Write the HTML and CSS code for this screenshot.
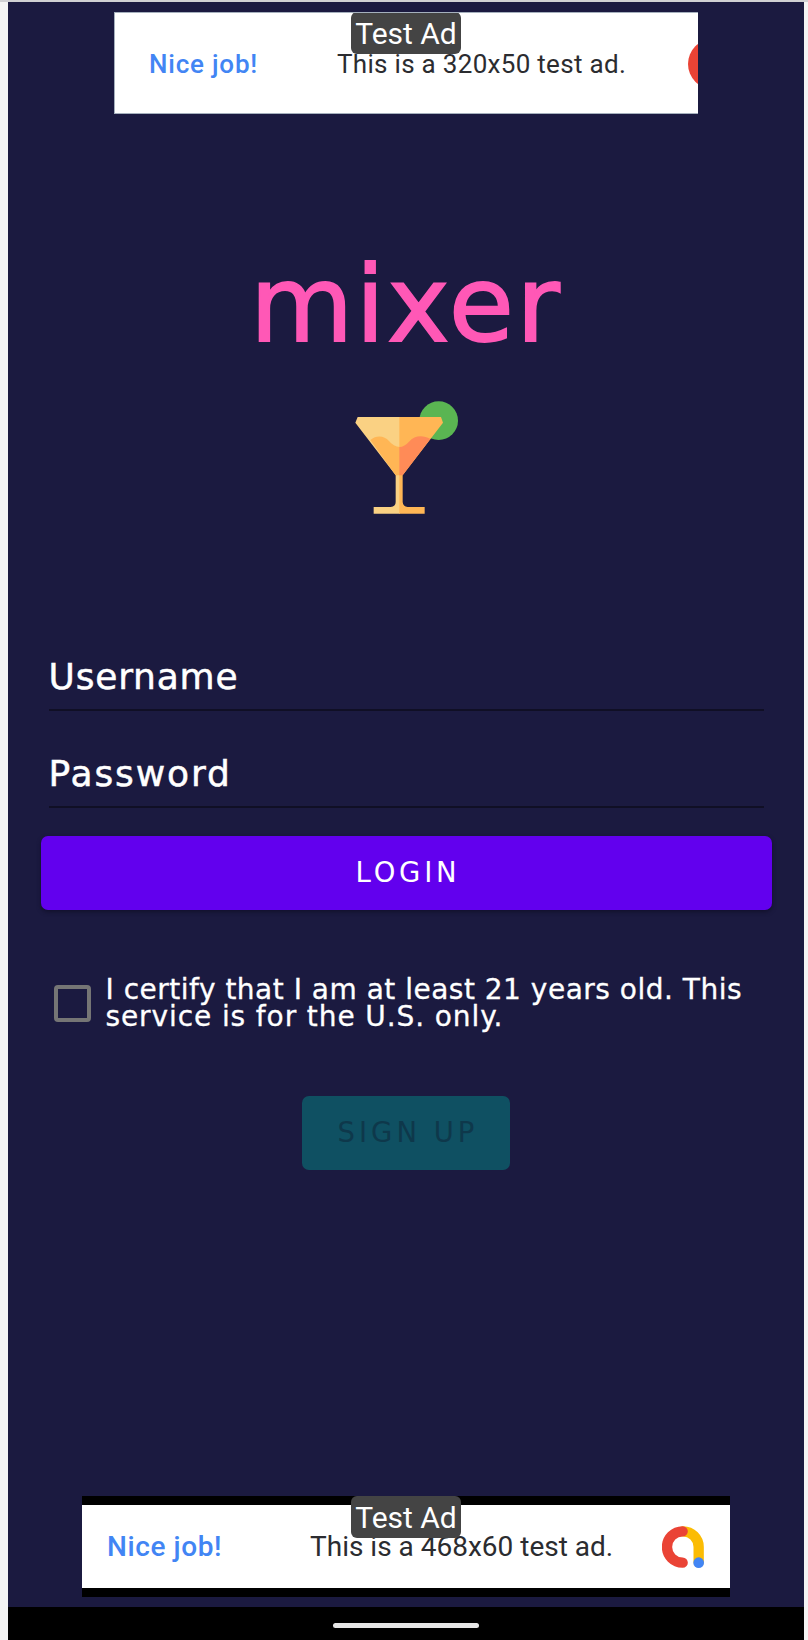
FILE: index.html
```html
<!DOCTYPE html>
<html lang="en">
<head>
<meta charset="utf-8">
<title>mixer</title>
<link rel="stylesheet" href="styles.css">
</head>
<body>
<main class="screen">
  <section class="ad ad-top">
    <span class="badge">Test Ad</span>
    <span class="nice">Nice job!</span>
    <span class="message">This is a 320x50 test ad.</span>
    <span class="red-dot"></span>
  </section>
  <h1 class="brand">mixer</h1>
  <svg class="cocktail" viewBox="0 0 390 405" aria-hidden="true">
    <circle cx="296" cy="92" r="58" fill="#5ab552"/>
    <path d="M53 81H180V371H101V351H152Q167 350 167 336V256L46 98Z" fill="#fad183"/>
    <path d="M178 81H303L309 98L188 256V336Q189 350 203 351H254V371H178Z" fill="#ffb655"/>
    <path d="M91 150C110 134 133 137 147 153Q160 170 180 171V256H167Z" fill="#ffb655"/>
    <path d="M178 171Q194 170 207 155C224 135 250 135 271 147L188 256H178Z" fill="#ff8b57"/>
  </svg>
  <form class="form">
    <div class="field username">Username</div>
    <div class="field password">Password</div>
    <button class="login" type="button">LOGIN</button>
    <label class="certify">
      <span class="box"></span>
      <span class="terms"><span class="line first">I certify that I am at least 21 years old. This</span> <span class="line second">service is for the U.S. only.</span></span>
    </label>
    <button class="signup" type="button">SIGN UP</button>
  </form>
  <section class="ad ad-bottom">
    <span class="badge">Test Ad</span>
    <span class="nice">Nice job!</span>
    <span class="message">This is a 468x60 test ad.</span>
    <svg class="admob" viewBox="0 0 126 126" aria-hidden="true" fill="none" stroke-width="31" stroke-linecap="round">
      <path d="M62 16A47 47 0 0 1 110 64V108" stroke="#fbbc04"/>
      <path d="M62 16A47 47 0 0 0 62 110" stroke="#ea4335"/>
      <circle cx="110" cy="110" r="16" fill="#4285f4"/>
    </svg>
  </section>
  <footer class="nav"><span class="pill"></span></footer>
</main>
</body>
</html>
```
FILE: styles.css
```css
* { box-sizing: border-box; }
body {
  margin: 0;
  height: 1640px;
  padding: 0 4px 0 8px;
  border-top: 2px solid #d0d0d3;
  background: #f4f4f4;
  overflow: hidden;
}
.screen {
  height: 1638px;
  padding-top: 10px;
  display: flex;
  flex-direction: column;
  align-items: center;
  background: #1b1a40;
  color: #fff;
  font-family: "DejaVu Sans", sans-serif;
}
.ad {
  position: relative;
  flex: none;
  display: flex;
  align-items: center;
  overflow: hidden;
  background: #fff;
  color: #2b2c30;
  font-family: Roboto, sans-serif;
  font-size: 26px;
  line-height: 32px;
  white-space: nowrap;
}
.ad-top {
  width: 584px;
  height: 102px;
  padding: 2px 0 0 34px;
  border: 1px solid #a5b0bd;
  border-right: 0;
}
.ad-bottom {
  width: 648px;
  height: 101px;
  margin-top: 326px;
  padding: 1px 0 0 25px;
  border: solid #000;
  border-width: 9px 0;
  overflow: visible;
  font-size: 28px;
}
.badge {
  position: absolute;
  top: -1px;
  left: 236px;
  width: 110px;
  height: 42px;
  border-radius: 6px;
  background: #444;
  color: #fff;
  font-size: 30px;
  line-height: 44px;
  text-align: center;
}
.ad-bottom .badge { top: -9px; left: 269px; }
.nice { flex: none; width: 188px; color: #4285f4; font-weight: 500; letter-spacing: 0.8px; }
.ad-bottom .nice { width: 203px; letter-spacing: 0.6px; }
.message { flex: none; width: 351px; letter-spacing: 0.3px; }
.ad-bottom .message { width: 352px; letter-spacing: 0; }
.red-dot { flex: none; width: 50px; height: 50px; border-radius: 50%; background: #ea4335; }
.admob { width: 42px; height: 42px; }
.brand {
  margin: 129px 0 0;
  padding-left: 0;
  color: #ff58b6;
  font-size: 106px;
  font-weight: 400;
  line-height: 124px;
  letter-spacing: 2.2px;
  -webkit-text-stroke: 1.8px #ff58b6;
}
.cocktail { width: 130px; height: 135px; margin: 23px 2px 0 0; }
.form {
  width: 731px;
  margin-top: 106px;
  display: flex;
  flex-direction: column;
  align-items: center;
}
.field {
  width: 715px;
  height: 80px;
  margin-bottom: 17px;
  border-bottom: 2px solid #100f25;
  font-size: 36px;
  line-height: 92px;
  -webkit-text-stroke: 0.5px #fff;
}
.username { letter-spacing: 0.8px; }
.password { letter-spacing: 1.9px; }
.login, .signup {
  height: 74px;
  padding: 0 0 2px 4px;
  border: 0;
  border-radius: 7px;
  font: 27.5px/70px "DejaVu Sans", sans-serif;
  letter-spacing: 3.8px;
}
.login {
  width: 731px;
  margin-top: 11px;
  background: #6200ee;
  color: #fff;
  box-shadow: 0 2px 4px #12112c;
}
.certify {
  width: 731px;
  height: 60px;
  margin-top: 63px;
  padding-left: 13px;
  display: flex;
  align-items: center;
  gap: 15px;
}
.box { flex: none; width: 37px; height: 37px; border: 4px solid #757575; border-radius: 4px; }
.terms { font-size: 28px; line-height: 27px; white-space: nowrap; -webkit-text-stroke: 0.3px #fff; }
.line { display: block; }
.first { letter-spacing: 0.5px; }
.second { letter-spacing: 0.9px; }
.signup { width: 208px; margin-top: 63px; background: #0f5062; color: #0e384b; letter-spacing: 4px; }
.nav {
  width: 100%;
  height: 33px;
  margin-top: auto;
  display: flex;
  justify-content: center;
  padding-top: 16px;
  background: #000;
}
.pill { width: 146px; height: 5px; border-radius: 3px; background: #e6e6e6; }
```
